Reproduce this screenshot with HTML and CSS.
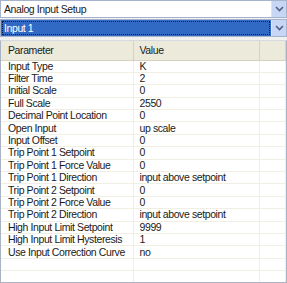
FILE: index.html
```html
<!DOCTYPE html>
<html lang="en">
<head>
    <meta charset="UTF-8">
    <title>Analog Input Setup</title>
    <link rel="stylesheet" href="styles.css">
</head>
<body>
    <div class="panel">
        <!-- selectors -->
        <div class="combo">
            <span class="combo-text">Analog Input Setup</span>
            <span class="combo-btn"><svg width="9" height="6" viewBox="0 0 9 6"><path d="M1 1l3.5 3.5L8 1" fill="none" stroke="#4d6185" stroke-width="1.6"/></svg></span>
        </div>
        <div class="combo">
            <span class="combo-text selected"><span class="focus">Input 1</span></span>
            <span class="combo-btn"><svg width="9" height="6" viewBox="0 0 9 6"><path d="M1 1l3.5 3.5L8 1" fill="none" stroke="#4d6185" stroke-width="1.6"/></svg></span>
        </div>

        <!-- parameter grid -->
        <div class="grid">
            <table class="params">
                <thead>
                    <tr><th>Parameter</th><th>Value</th><th></th></tr>
                </thead>
                <tbody>
                    <tr><td>Input Type</td><td>K</td><td></td></tr>
                    <tr><td>Filter Time</td><td>2</td><td></td></tr>
                    <tr><td>Initial Scale</td><td>0</td><td></td></tr>
                    <tr><td>Full Scale</td><td>2550</td><td></td></tr>
                    <tr><td>Decimal Point Location</td><td>0</td><td></td></tr>
                    <tr><td>Open Input</td><td>up scale</td><td></td></tr>
                    <tr><td>Input Offset</td><td>0</td><td></td></tr>
                    <tr><td>Trip Point 1 Setpoint</td><td>0</td><td></td></tr>
                    <tr><td>Trip Point 1 Force Value</td><td>0</td><td></td></tr>
                    <tr><td>Trip Point 1 Direction</td><td>input above setpoint</td><td></td></tr>
                    <tr><td>Trip Point 2 Setpoint</td><td>0</td><td></td></tr>
                    <tr><td>Trip Point 2 Force Value</td><td>0</td><td></td></tr>
                    <tr><td>Trip Point 2 Direction</td><td>input above setpoint</td><td></td></tr>
                    <tr><td>High Input Limit Setpoint</td><td>9999</td><td></td></tr>
                    <tr><td>High Input Limit Hysteresis</td><td>1</td><td></td></tr>
                    <tr><td>Use Input Correction Curve</td><td>no</td><td></td></tr>
                    <tr><td></td><td></td><td></td></tr>
                    <tr><td></td><td></td><td></td></tr>
                    <tr><td></td><td></td><td></td></tr>
                </tbody>
            </table>
        </div>
    </div>
</body>
</html>
```

FILE: styles.css
```css
* {
    margin: 0;
    padding: 0;
    box-sizing: border-box;
}

body {
    font-family: 'Liberation Sans', Arial, sans-serif;
    font-size: 10.5px;
    letter-spacing: -0.4px;
    color: #1a1a1a;
    background: #f0f0ee;
}

.panel {
    width: 287px;
    height: 283px;
    overflow: hidden;
    display: flex;
    flex-direction: column;
}

.combo {
    display: flex;
    height: 18px;
    margin-bottom: 1px;
    border: 1px solid #a5b4cc;
    background: white;
}

.combo-text {
    flex: 1;
    display: flex;
    align-items: center;
    padding: 1px;
}

.combo-text.selected {
    background: #316ac5;
    color: white;
}

.combo-text .focus {
    flex: 1;
    height: 100%;
    display: flex;
    align-items: center;
    padding-left: 1px;
    border: 1px dotted #0c1a40;
}

.combo:first-child .combo-text {
    padding-left: 3px;
}

.combo-btn {
    width: 15px;
    display: flex;
    align-items: center;
    justify-content: center;
    background: #c7d6f5;
    border-left: 1px solid #dbe5f8;
}

.grid {
    flex: 1;
    margin-top: 2px;
    border: 1px solid #a9b3c4;
    border-top-color: #d6d9e0;
    background: white;
    overflow: hidden;
}

.params {
    width: 100%;
    border-collapse: collapse;
    table-layout: fixed;
}

.params th {
    height: 19px;
    background: #ebeadb;
    font-weight: normal;
    text-align: left;
    padding-left: 6px;
    border-bottom: 1px solid #d6d2c2;
    border-right: 1px solid #d6d2c2;
}

.params th:first-child {
    width: 132px;
    padding-left: 7px;
}

.params th:nth-child(2) {
    width: 126px;
}

.params td {
    height: 12.4px;
    line-height: 11px;
    padding: 0 0 0 6px;
    border-bottom: 1px solid #f1efe2;
    border-right: 1px solid #f1efe2;
    white-space: nowrap;
    overflow: hidden;
}

.params td:first-child {
    padding-left: 7px;
}
```
